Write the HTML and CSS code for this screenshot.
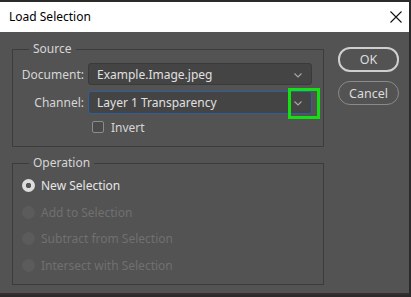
FILE: index.html
```html
<!DOCTYPE html>
<html>
<head>
<meta charset="utf-8">
<link rel="stylesheet" href="styles.css">
</head>
<body>
<div class="window">
  <div class="titlebar">
    <span class="title">Load Selection</span>
    <svg class="close" width="12" height="12" viewBox="0 0 12 12"><path d="M0.5 0.5 L11.5 11.5 M11.5 0.5 L0.5 11.5" stroke="#111" stroke-width="1.1" fill="none"/></svg>
  </div>
  <div class="body">
    <div class="groups">
      <fieldset class="group source">
        <legend>Source</legend>
        <div class="form">
          <label class="lbl">Document:</label>
          <div class="select"><span>Example.Image.jpeg</span><svg class="chev" width="8" height="5" viewBox="0 0 8 5"><path d="M0.5 0.5 L4 4 L7.5 0.5" stroke="#a8a8a8" stroke-width="1.1" fill="none"/></svg></div>
          <label class="lbl">Channel:</label>
          <div class="select focused"><span>Layer 1 Transparency</span><svg class="chev" width="8" height="5" viewBox="0 0 8 5"><path d="M0.5 0.5 L4 4 L7.5 0.5" stroke="#a8a8a8" stroke-width="1.1" fill="none"/></svg><div class="highlight"></div></div>
          <span></span>
          <div class="check"><span class="box"></span><span>Invert</span></div>
        </div>
      </fieldset>
      <fieldset class="group operation">
        <legend>Operation</legend>
        <div class="radios">
          <div class="radio on"><span class="dot"></span><span>New Selection</span></div>
          <div class="radio off"><span class="dot"></span><span>Add to Selection</span></div>
          <div class="radio off"><span class="dot"></span><span>Subtract from Selection</span></div>
          <div class="radio off"><span class="dot"></span><span>Intersect with Selection</span></div>
        </div>
      </fieldset>
    </div>
    <div class="buttons">
      <div class="btn primary">OK</div>
      <div class="btn">Cancel</div>
    </div>
  </div>
  <div class="bottom-edge"></div>
</div>
</body>
</html>
```

FILE: styles.css
```css
* { box-sizing: border-box; }
html, body { margin: 0; padding: 0; }
body {
  width: 411px;
  height: 297px;
  overflow: hidden;
  background: #2a2a2a;
  font-family: "Noto Sans", "Open Sans", sans-serif;
  font-size: 12px;
  color: #d6d6d6;
}
.window {
  margin-top: 2px;
  width: 409px;
  height: 293px;
  background: #535353;
  display: flex;
  flex-direction: column;
}
.titlebar {
  height: 30px;
  background: #ffffff;
  display: flex;
  align-items: center;
  justify-content: space-between;
  padding: 0 7px 0 9px;
  color: #000;
}
.title {
  font-family: "Noto Sans", sans-serif;
  font-size: 12px;
  margin-top: -1px;
}
.body {
  flex: 1;
  display: flex;
  padding: 0 0 0 12px;
}
.groups {
  width: 312px;
  display: flex;
  flex-direction: column;
}
.group {
  margin: 0;
  border: 1px solid #3c3c3c;
  padding: 0;
  min-width: 0;
}
.group legend {
  margin-left: 16px;
  padding: 0 4px;
  font-size: 12px;
  line-height: 16px;
}
.source {
  margin-top: 9px;
  height: 106px;
}
.operation {
  margin-top: 8px;
  height: 130px;
}
.form {
  display: grid;
  grid-template-columns: 71px 224px;
  column-gap: 4px;
  row-gap: 6px;
  margin-top: 6px;
  align-items: center;
}
.lbl {
  text-align: right;
  font-size: 12px;
}
.select {
  position: relative;
  height: 22px;
  background: #444444;
  border: 1px solid #3a3a3a;
  border-radius: 3px;
  display: flex;
  align-items: center;
  justify-content: space-between;
  padding: 0 9px 0 8px;
  font-size: 12px;
  color: #e0e0e0;
}
.select.focused {
  border-color: #2f5f9e;
  height: 23px;
}
.chev { margin-top: 2px; }
.highlight {
  position: absolute;
  right: -9px;
  top: -4px;
  width: 32px;
  height: 31px;
  border: 3px solid #13e013;
}
.check {
  display: flex;
  align-items: center;
  gap: 7px;
  margin-left: 4px;
  margin-top: -2px;
  font-size: 12px;
  height: 18px;
}
.box {
  width: 12px;
  height: 12px;
  border: 1px solid #8c8c8c;
  border-radius: 2px;
  background: #4b4b4b;
}
.radios {
  display: flex;
  flex-direction: column;
  padding-left: 9px;
  margin-top: 1px;
}
.radio {
  height: 26.7px;
  display: flex;
  align-items: center;
  gap: 6px;
  font-size: 12px;
}
.dot {
  width: 13px;
  height: 13px;
  border-radius: 50%;
  display: inline-block;
}
.radio.on .dot {
  background: radial-gradient(circle, #555 0 2.5px, #dcdcdc 3px);
}
.radio.on { color: #e6e6e6; }
.radio.off { color: #707070; }
.radio.off .dot { background: #5b5b5b; }
.buttons {
  margin-left: 14px;
  margin-top: 15px;
  display: flex;
  flex-direction: column;
  gap: 9px;
}
.btn {
  width: 61px;
  height: 24px;
  border: 1px solid #8a8a8a;
  border-radius: 12px;
  display: flex;
  align-items: center;
  justify-content: center;
  font-size: 12.5px;
  color: #dcdcdc;
}
.btn.primary {
  border: 2px solid #cfcfcf;
  height: 25px;
}
.bottom-edge {
  height: 2px;
  background: #3a2c2c;
}
```
